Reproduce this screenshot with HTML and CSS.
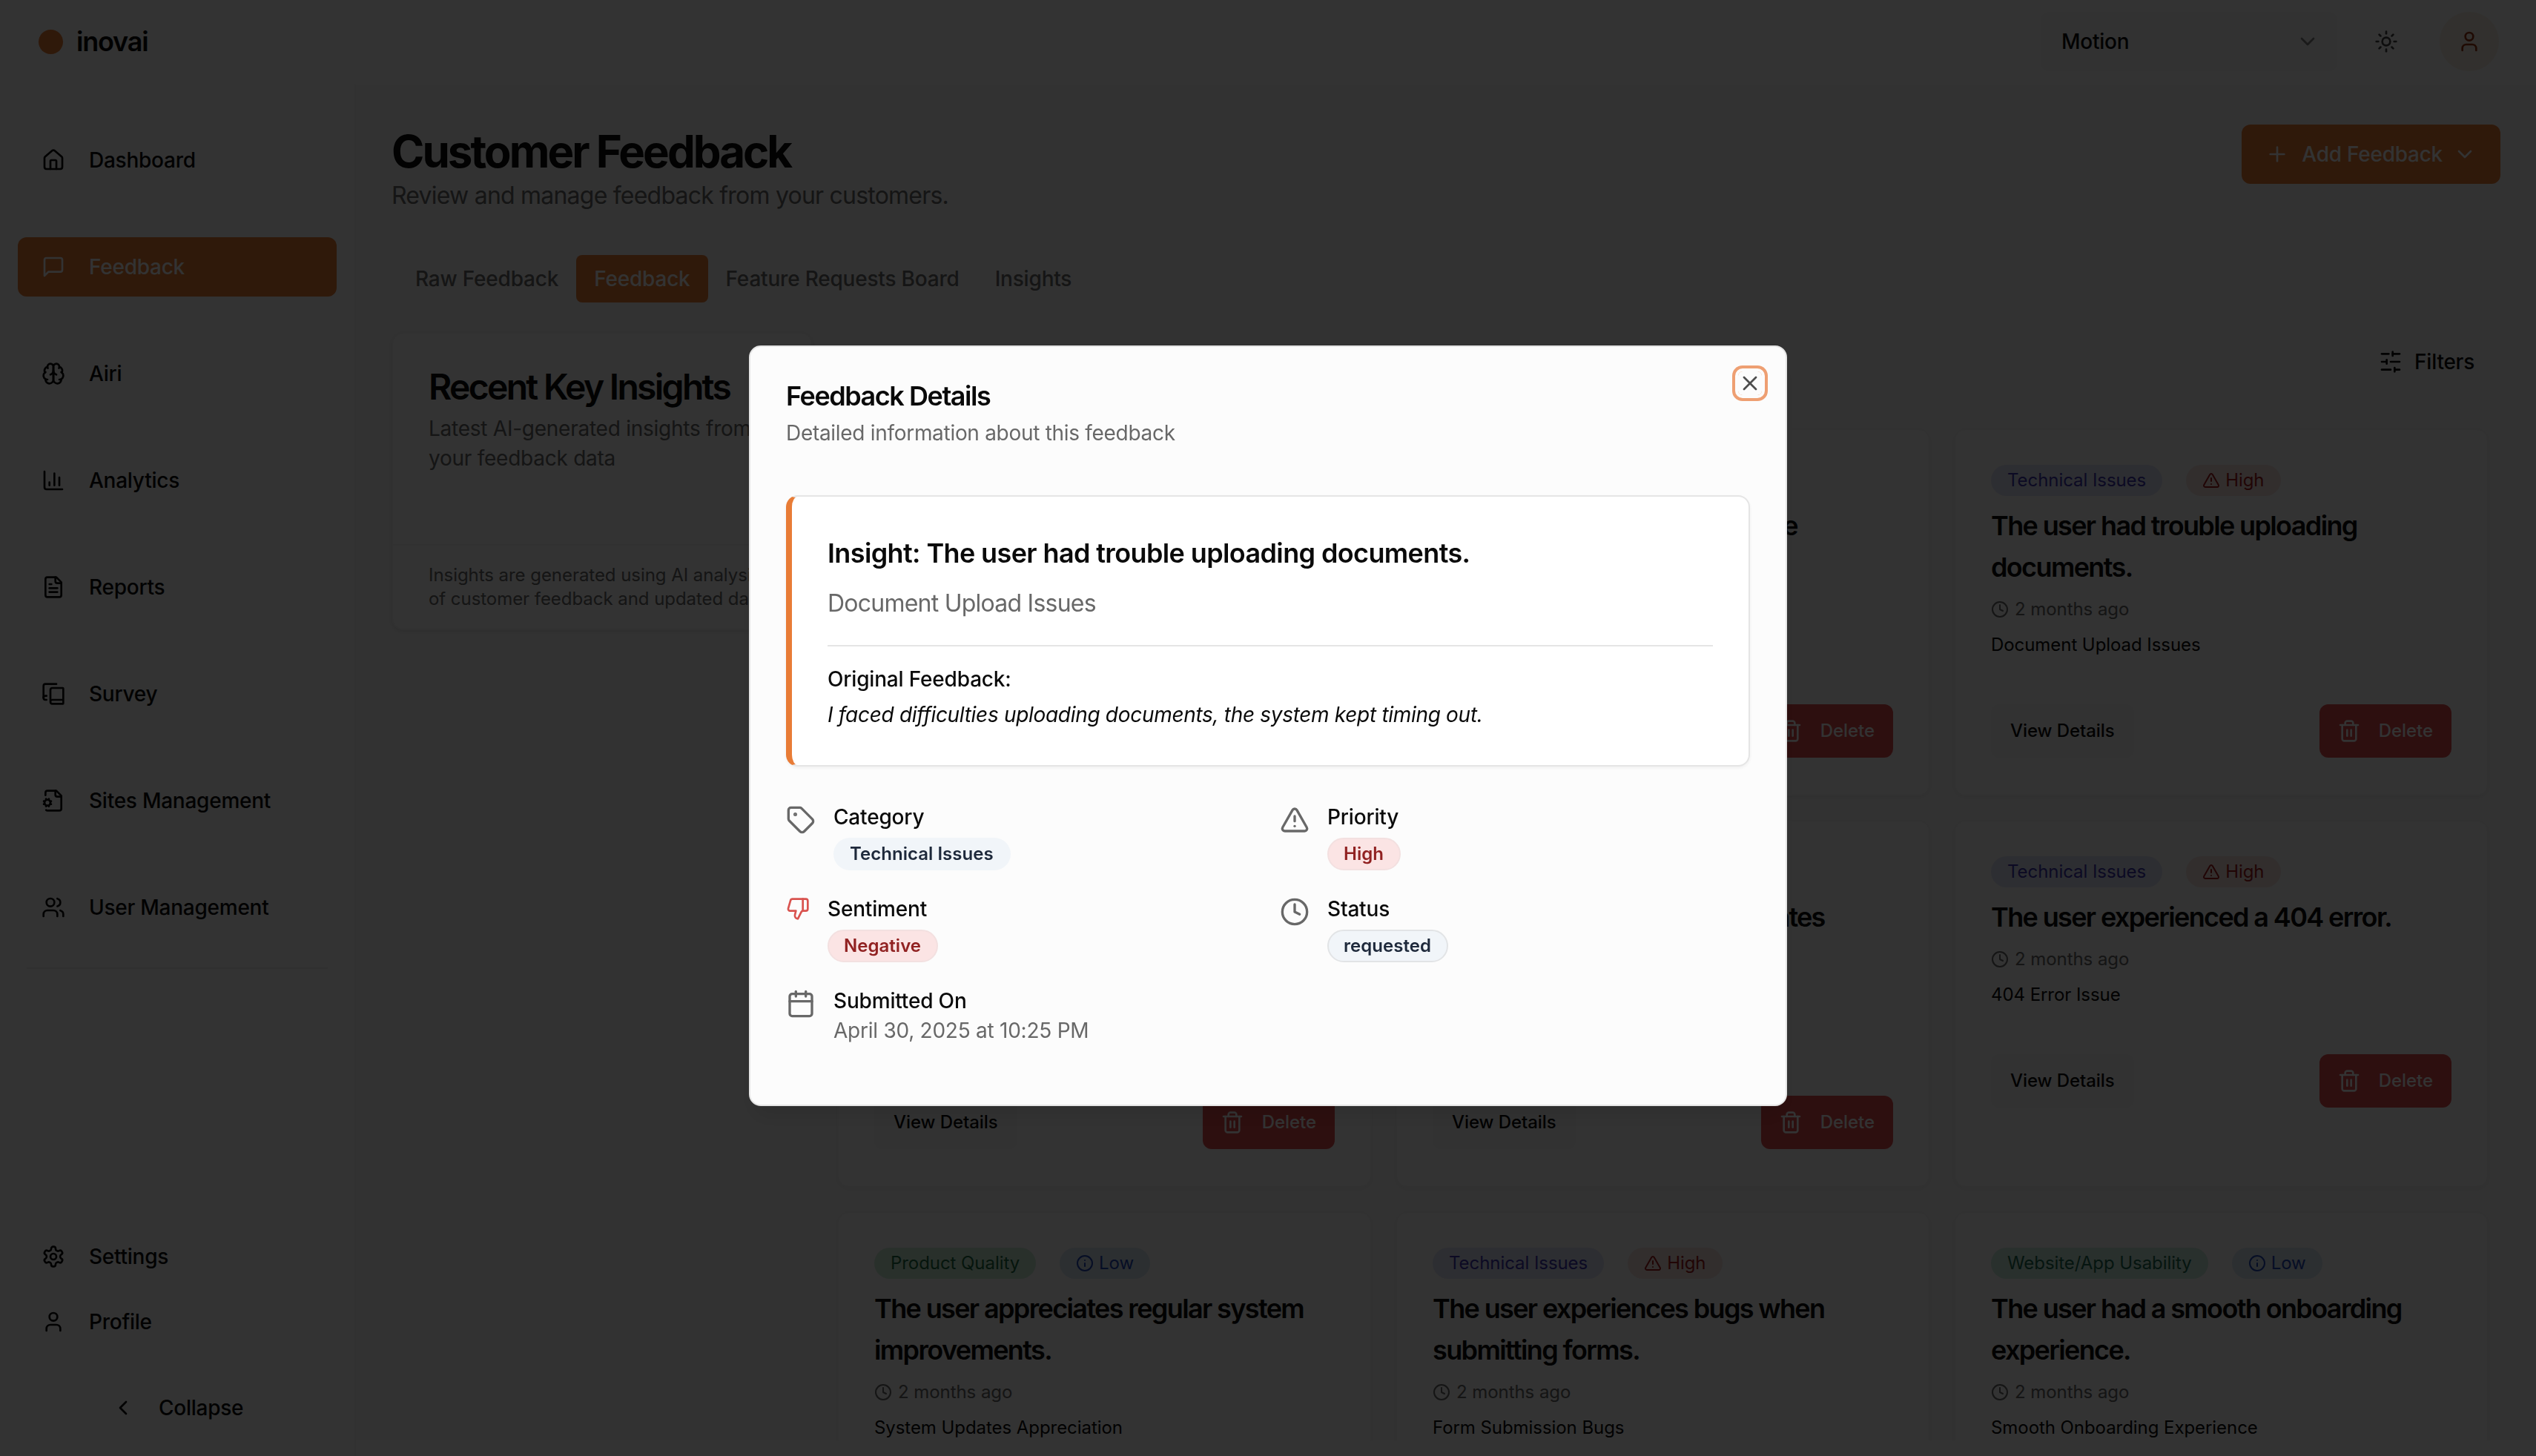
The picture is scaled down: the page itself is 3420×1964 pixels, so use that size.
FILE: index.html
```html
<!DOCTYPE html>
<html lang="en">
<head>
<meta charset="utf-8">
<title>inovai – Customer Feedback</title>
<link rel="stylesheet" href="styles.css">
</head>
<body>
<svg class="sprite" aria-hidden="true">
  <symbol id="house" viewBox="0 0 24 24"><path d="M15 21v-8a1 1 0 0 0-1-1h-4a1 1 0 0 0-1 1v8"/><path d="M3 10a2 2 0 0 1 .709-1.528l7-5.999a2 2 0 0 1 2.582 0l7 5.999A2 2 0 0 1 21 10v9a2 2 0 0 1-2 2H5a2 2 0 0 1-2-2z"/></symbol>
  <symbol id="message" viewBox="0 0 24 24"><path d="M21 15a2 2 0 0 1-2 2H7l-4 4V5a2 2 0 0 1 2-2h14a2 2 0 0 1 2 2z"/></symbol>
  <symbol id="brain" viewBox="0 0 24 24"><path d="M12 5a3 3 0 1 0-5.997.125 4 4 0 0 0-2.526 5.77 4 4 0 0 0 .556 6.588A4 4 0 1 0 12 18Z"/><path d="M12 5a3 3 0 1 1 5.997.125 4 4 0 0 1 2.526 5.77 4 4 0 0 1-.556 6.588A4 4 0 1 1 12 18Z"/><path d="M15 13a4.5 4.5 0 0 1-3-4 4.5 4.5 0 0 1-3 4"/><path d="M17.599 6.5a3 3 0 0 0 .399-1.375"/><path d="M6.003 5.125A3 3 0 0 0 6.401 6.5"/><path d="M3.477 10.896a4 4 0 0 1 .585-.396"/><path d="M19.938 10.5a4 4 0 0 1 .585.396"/><path d="M6 18a4 4 0 0 1-1.967-.516"/><path d="M19.967 17.484A4 4 0 0 1 18 18"/></symbol>
  <symbol id="chart" viewBox="0 0 24 24"><path d="M3 3v16a2 2 0 0 0 2 2h16"/><path d="M18 17V9"/><path d="M13 17V5"/><path d="M8 17v-3"/></symbol>
  <symbol id="file-text" viewBox="0 0 24 24"><path d="M15 2H6a2 2 0 0 0-2 2v16a2 2 0 0 0 2 2h12a2 2 0 0 0 2-2V7Z"/><path d="M14 2v4a2 2 0 0 0 2 2h4"/><path d="M10 9H8"/><path d="M16 13H8"/><path d="M16 17H8"/></symbol>
  <symbol id="book-copy" viewBox="0 0 24 24"><path d="M2 16V4a2 2 0 0 1 2-2h11"/><path d="M22 18H11a2 2 0 1 0 0 4h10.5a.5.5 0 0 0 .5-.5v-15a.5.5 0 0 0-.5-.5H11a2 2 0 0 0-2 2v12"/><path d="M5 14H4a2 2 0 1 0 0 4h1"/></symbol>
  <symbol id="file-cog" viewBox="0 0 24 24"><path d="M14 2v4a2 2 0 0 0 2 2h4"/><path d="m3.2 12.9-.9-.4"/><path d="m3.2 15.1-.9.4"/><path d="M4.677 21.5a2 2 0 0 0 1.313.5H18a2 2 0 0 0 2-2V7l-5-5H6a2 2 0 0 0-2 2v2.5"/><path d="m4.9 11.2-.4-.9"/><path d="m4.9 16.8-.4.9"/><path d="m7.5 10.3-.4.9"/><path d="m7.5 17.7-.4-.9"/><path d="m9.7 12.5-.9.4"/><path d="m9.7 15.5-.9-.4"/><circle cx="6" cy="14" r="3"/></symbol>
  <symbol id="users" viewBox="0 0 24 24"><path d="M16 21v-2a4 4 0 0 0-4-4H6a4 4 0 0 0-4 4v2"/><circle cx="9" cy="7" r="4"/><path d="M22 21v-2a4 4 0 0 0-3-3.87"/><path d="M16 3.13a4 4 0 0 1 0 7.75"/></symbol>
  <symbol id="settings" viewBox="0 0 24 24"><path d="M12.22 2h-.44a2 2 0 0 0-2 2v.18a2 2 0 0 1-1 1.73l-.43.25a2 2 0 0 1-2 0l-.15-.08a2 2 0 0 0-2.73.73l-.22.38a2 2 0 0 0 .73 2.73l.15.1a2 2 0 0 1 1 1.72v.51a2 2 0 0 1-1 1.74l-.15.09a2 2 0 0 0-.73 2.73l.22.38a2 2 0 0 0 2.73.73l.15-.08a2 2 0 0 1 2 0l.43.25a2 2 0 0 1 1 1.73V20a2 2 0 0 0 2 2h.44a2 2 0 0 0 2-2v-.18a2 2 0 0 1 1-1.73l.43-.25a2 2 0 0 1 2 0l.15.08a2 2 0 0 0 2.73-.73l.22-.39a2 2 0 0 0-.73-2.73l-.15-.08a2 2 0 0 1-1-1.74v-.5a2 2 0 0 1 1-1.74l.15-.09a2 2 0 0 0 .73-2.73l-.22-.38a2 2 0 0 0-2.73-.73l-.15.08a2 2 0 0 1-2 0l-.43-.25a2 2 0 0 1-1-1.73V4a2 2 0 0 0-2-2z"/><circle cx="12" cy="12" r="3"/></symbol>
  <symbol id="user" viewBox="0 0 24 24"><path d="M19 21v-2a4 4 0 0 0-4-4H9a4 4 0 0 0-4 4v2"/><circle cx="12" cy="7" r="4"/></symbol>
  <symbol id="chev-left" viewBox="0 0 24 24"><path d="m15 18-6-6 6-6"/></symbol>
  <symbol id="chev-down" viewBox="0 0 24 24"><path d="m6 9 6 6 6-6"/></symbol>
  <symbol id="plus" viewBox="0 0 24 24"><path d="M5 12h14"/><path d="M12 5v14"/></symbol>
  <symbol id="sun" viewBox="0 0 24 24"><circle cx="12" cy="12" r="4"/><path d="M12 2v2"/><path d="M12 20v2"/><path d="m4.93 4.93 1.41 1.41"/><path d="m17.66 17.66 1.41 1.41"/><path d="M2 12h2"/><path d="M20 12h2"/><path d="m6.34 17.66-1.41 1.41"/><path d="m19.07 4.93-1.41 1.41"/></symbol>
  <symbol id="sliders" viewBox="0 0 24 24"><path d="M21 4h-7"/><path d="M10 4H3"/><path d="M21 12h-9"/><path d="M8 12H3"/><path d="M21 20h-5"/><path d="M12 20H3"/><path d="M14 2v4"/><path d="M8 10v4"/><path d="M16 18v4"/></symbol>
  <symbol id="trash" viewBox="0 0 24 24"><path d="M3 6h18"/><path d="M19 6v14c0 1-1 2-2 2H7c-1 0-2-1-2-2V6"/><path d="M8 6V4c0-1 1-2 2-2h4c1 0 2 1 2 2v2"/><path d="M10 11v6"/><path d="M14 11v6"/></symbol>
  <symbol id="alert" viewBox="0 0 24 24"><path d="m21.73 18-8-14a2 2 0 0 0-3.48 0l-8 14A2 2 0 0 0 4 21h16a2 2 0 0 0 1.73-3"/><path d="M12 9v4"/><path d="M12 17h.01"/></symbol>
  <symbol id="info" viewBox="0 0 24 24"><circle cx="12" cy="12" r="10"/><path d="M12 16v-4"/><path d="M12 8h.01"/></symbol>
  <symbol id="clock" viewBox="0 0 24 24"><circle cx="12" cy="12" r="10"/><path d="M12 6v6l4 2"/></symbol>
  <symbol id="tag" viewBox="0 0 24 24"><path d="M12.586 2.586A2 2 0 0 0 11.172 2H4a2 2 0 0 0-2 2v7.172a2 2 0 0 0 .586 1.414l8.704 8.704a2.426 2.426 0 0 0 3.42 0l6.58-6.58a2.426 2.426 0 0 0 0-3.42z"/><circle cx="7.5" cy="7.5" r=".5" fill="currentColor"/></symbol>
  <symbol id="thumbs-down" viewBox="0 0 24 24"><path d="M17 14V2"/><path d="M9 18.12 10 14H4.17a2 2 0 0 1-1.92-2.56l2.33-8A2 2 0 0 1 6.5 2H20a2 2 0 0 1 2 2v8a2 2 0 0 1-2 2h-2.76a2 2 0 0 0-1.79 1.11L12 22a3.13 3.13 0 0 1-3-3.88Z"/></symbol>
  <symbol id="calendar" viewBox="0 0 24 24"><path d="M8 2v4"/><path d="M16 2v4"/><rect width="18" height="18" x="3" y="4" rx="2"/><path d="M3 10h18"/></symbol>
  <symbol id="close" viewBox="0 0 24 24"><path d="M18 6 6 18"/><path d="m6 6 12 12"/></symbol>
</svg>

<div class="app">
  <header class="topbar">
    <div class="brand"><span class="brand-dot"></span><span class="brand-name">inovai</span></div>
    <div class="top-actions">
      <div class="select"><span>Motion</span><svg class="icon faded"><use href="#chev-down"/></svg></div>
      <svg class="icon theme"><use href="#sun"/></svg>
      <div class="avatar"><svg class="icon"><use href="#user"/></svg></div>
    </div>
  </header>

  <div class="shell">
    <aside class="sidebar">
      <nav class="nav">
        <a class="nav-item"><svg class="icon"><use href="#house"/></svg>Dashboard</a>
        <a class="nav-item active"><svg class="icon"><use href="#message"/></svg>Feedback</a>
        <a class="nav-item"><svg class="icon"><use href="#brain"/></svg>Airi</a>
        <a class="nav-item"><svg class="icon"><use href="#chart"/></svg>Analytics</a>
        <a class="nav-item"><svg class="icon"><use href="#file-text"/></svg>Reports</a>
        <a class="nav-item"><svg class="icon"><use href="#book-copy"/></svg>Survey</a>
        <a class="nav-item"><svg class="icon"><use href="#file-cog"/></svg>Sites Management</a>
        <a class="nav-item"><svg class="icon"><use href="#users"/></svg>User Management</a>
      </nav>
      <hr class="nav-rule">
      <nav class="nav-bottom">
        <a class="nav-item"><svg class="icon"><use href="#settings"/></svg>Settings</a>
        <a class="nav-item"><svg class="icon"><use href="#user"/></svg>Profile</a>
        <a class="collapse"><svg class="icon"><use href="#chev-left"/></svg>Collapse</a>
      </nav>
    </aside>

    <main class="main">
      <div class="page-head">
        <div>
          <h1>Customer Feedback</h1>
          <p class="subtitle">Review and manage feedback from your customers.</p>
        </div>
        <button class="btn-add"><svg class="icon"><use href="#plus"/></svg>Add Feedback<svg class="icon caret"><use href="#chev-down"/></svg></button>
      </div>

      <div class="tabs">
        <span class="tab">Raw Feedback</span><span class="tab active">Feedback</span><span class="tab">Feature Requests Board</span><span class="tab">Insights</span>
      </div>

      <div class="content">
        <section class="insights">
          <div class="insights-head">
            <h2>Recent Key Insights</h2>
            <p>Latest AI-generated insights from your feedback data</p>
          </div>
          <p class="insights-foot">Insights are generated using AI analysis<br>of customer feedback and updated daily.</p>
        </section>

        <section class="board">
          <div class="board-tools"><svg class="icon"><use href="#sliders"/></svg>Filters</div>
          <div class="cards">
            <article class="card">
              <div class="badges"><span class="badge tech">Technical Issues</span><span class="badge high"><svg class="icon-xs"><use href="#alert"/></svg>High</span></div>
              <h3>The user had trouble uploading documents.</h3>
              <p class="time"><svg class="icon-xs"><use href="#clock"/></svg>2 months ago</p>
              <p class="topic">Document Upload Issues</p>
              <div class="card-actions"><button class="btn-view">View Details</button><button class="btn-delete"><svg class="icon"><use href="#trash"/></svg>Delete</button></div>
            </article>
            <article class="card">
              <div class="badges"><span class="badge tech">Technical Issues</span><span class="badge high"><svg class="icon-xs"><use href="#alert"/></svg>High</span></div>
              <h3>The user reported issues to the<br>support team.</h3>
              <p class="time"><svg class="icon-xs"><use href="#clock"/></svg>2 months ago</p>
              <p class="topic">Document Upload Issues</p>
              <div class="card-actions"><button class="btn-view">View Details</button><button class="btn-delete"><svg class="icon"><use href="#trash"/></svg>Delete</button></div>
            </article>
            <article class="card">
              <div class="badges"><span class="badge tech">Technical Issues</span><span class="badge high"><svg class="icon-xs"><use href="#alert"/></svg>High</span></div>
              <h3>The user had trouble uploading documents.</h3>
              <p class="time"><svg class="icon-xs"><use href="#clock"/></svg>2 months ago</p>
              <p class="topic">Document Upload Issues</p>
              <div class="card-actions"><button class="btn-view">View Details</button><button class="btn-delete"><svg class="icon"><use href="#trash"/></svg>Delete</button></div>
            </article>

            <article class="card">
              <div class="badges"><span class="badge tech">Technical Issues</span><span class="badge high"><svg class="icon-xs"><use href="#alert"/></svg>High</span></div>
              <h3>The user had trouble uploading<br>documents.</h3>
              <p class="time"><svg class="icon-xs"><use href="#clock"/></svg>2 months ago</p>
              <p class="topic">Document Upload Issues</p>
              <div class="card-actions"><button class="btn-view">View Details</button><button class="btn-delete"><svg class="icon"><use href="#trash"/></svg>Delete</button></div>
            </article>
            <article class="card">
              <div class="badges"><span class="badge product">Product Quality</span><span class="badge low"><svg class="icon-xs"><use href="#info"/></svg>Low</span></div>
              <h3 class="snug">The user values frequent updates<br>to the system.</h3>
              <p class="time"><svg class="icon-xs"><use href="#clock"/></svg>2 months ago</p>
              <p class="topic">System Updates Appreciation</p>
              <div class="card-actions"><button class="btn-view">View Details</button><button class="btn-delete"><svg class="icon"><use href="#trash"/></svg>Delete</button></div>
            </article>
            <article class="card">
              <div class="badges"><span class="badge tech">Technical Issues</span><span class="badge high"><svg class="icon-xs"><use href="#alert"/></svg>High</span></div>
              <h3>The user experienced a 404 error.</h3>
              <p class="time"><svg class="icon-xs"><use href="#clock"/></svg>2 months ago</p>
              <p class="topic">404 Error Issue</p>
              <div class="card-actions"><button class="btn-view">View Details</button><button class="btn-delete"><svg class="icon"><use href="#trash"/></svg>Delete</button></div>
            </article>

            <article class="card">
              <div class="badges"><span class="badge product">Product Quality</span><span class="badge low"><svg class="icon-xs"><use href="#info"/></svg>Low</span></div>
              <h3>The user appreciates regular system<br>improvements.</h3>
              <p class="time"><svg class="icon-xs"><use href="#clock"/></svg>2 months ago</p>
              <p class="topic">System Updates Appreciation</p>
            </article>
            <article class="card">
              <div class="badges"><span class="badge tech">Technical Issues</span><span class="badge high"><svg class="icon-xs"><use href="#alert"/></svg>High</span></div>
              <h3>The user experiences bugs when<br>submitting forms.</h3>
              <p class="time"><svg class="icon-xs"><use href="#clock"/></svg>2 months ago</p>
              <p class="topic">Form Submission Bugs</p>
            </article>
            <article class="card">
              <div class="badges"><span class="badge usability">Website/App Usability</span><span class="badge low"><svg class="icon-xs"><use href="#info"/></svg>Low</span></div>
              <h3>The user had a smooth onboarding<br>experience.</h3>
              <p class="time"><svg class="icon-xs"><use href="#clock"/></svg>2 months ago</p>
              <p class="topic">Smooth Onboarding Experience</p>
            </article>
          </div>
        </section>
      </div>
    </main>
  </div>
</div>

<div class="overlay">
  <div class="dialog">
    <button class="dialog-close"><svg class="icon"><use href="#close"/></svg></button>
    <h2 class="dialog-title">Feedback Details</h2>
    <p class="dialog-desc">Detailed information about this feedback</p>
    <div class="insight">
      <h3>Insight: The user had trouble uploading documents.</h3>
      <p class="insight-topic">Document Upload Issues</p>
      <div class="original">
        <p class="label">Original Feedback:</p>
        <p class="quote">I faced difficulties uploading documents, the system kept timing out.</p>
      </div>
    </div>
    <div class="facts">
      <div class="fact"><svg class="icon-lg"><use href="#tag"/></svg><div><p class="label">Category</p><span class="pill slate">Technical Issues</span></div></div>
      <div class="fact"><svg class="icon-lg"><use href="#alert"/></svg><div><p class="label">Priority</p><span class="pill red">High</span></div></div>
      <div class="fact"><svg class="icon negative"><use href="#thumbs-down"/></svg><div><p class="label">Sentiment</p><span class="pill red">Negative</span></div></div>
      <div class="fact"><svg class="icon-lg"><use href="#clock"/></svg><div><p class="label">Status</p><span class="pill slate outlined">requested</span></div></div>
      <div class="fact"><svg class="icon-lg"><use href="#calendar"/></svg><div><p class="label">Submitted On</p><p class="date">April 30, 2025 at 10:25 PM</p></div></div>
    </div>
  </div>
</div>
</body>
</html>
```
FILE: styles.css
```css
:root {
  --orange: #e87c36;
  --red: #e04a4a;
  --muted: #686868;
  --line: #e5e5e5;
  --ink: #0a0a0a;
}
* { box-sizing: border-box; margin: 0; padding: 0; }
body {
  width: 3420px;
  height: 1964px;
  overflow: hidden;
  background: #fcfcfc;
  color: var(--ink);
  font-family: Inter, "Liberation Sans", sans-serif;
  font-size: 28px;
  line-height: 40px;
  letter-spacing: -0.25px;
}
button { font: inherit; letter-spacing: inherit; color: inherit; border: 0; background: none; }
.sprite { display: none; }
.icon, .icon-lg, .icon-xs {
  flex: none;
  width: 32px;
  height: 32px;
  fill: none;
  stroke: currentColor;
  stroke-width: 2;
  stroke-linecap: round;
  stroke-linejoin: round;
}
.icon-lg { width: 40px; height: 40px; }
.icon-xs { width: 24px; height: 24px; }

.app { display: flex; flex-direction: column; height: 1964px; }

/* Top bar */
.topbar {
  display: flex;
  align-items: center;
  justify-content: space-between;
  height: 114px;
  padding: 0 50px 2px 52px;
  flex: none;
}
.brand { display: flex; align-items: center; gap: 18px; }
.brand-dot { width: 33px; height: 33px; border-radius: 50%; background: var(--orange); }
.brand-name { font-size: 36px; font-weight: 600; letter-spacing: -1.2px; }
.top-actions { display: flex; align-items: center; }
.select {
  display: flex;
  align-items: center;
  justify-content: space-between;
  width: 400px;
  height: 80px;
  padding: 0 24px 0 28px;
  border-radius: 12px;
  background: #f8f8f8;
  font-weight: 500;
}
.faded { opacity: .5; }
.theme { margin: 0 56px 0 50px; color: #404040; }
.avatar {
  display: flex;
  align-items: center;
  justify-content: center;
  width: 80px;
  height: 80px;
  border-radius: 50%;
  background: #faf0e4;
  color: #9a3412;
}

/* Sidebar */
.shell { display: flex; flex: 1; min-height: 0; }
.sidebar {
  display: flex;
  flex-direction: column;
  flex: none;
  width: 480px;
  padding: 62px 24px 25px;
  border-right: 2px solid #f5f5f5;
}
.nav { display: flex; flex-direction: column; gap: 64px; }
.nav-item {
  display: flex;
  align-items: center;
  gap: 32px;
  height: 80px;
  padding: 0 32px;
  border-radius: 12px;
  font-weight: 500;
}
.nav-item.active { background: var(--orange); color: #fcfcfc; }
.nav-rule { margin: 41px 12px 0; border: 0; border-top: 2px solid #efefef; }
.nav-bottom { display: flex; flex-direction: column; gap: 8px; margin-top: auto; }
.collapse {
  display: flex;
  align-items: center;
  gap: 32px;
  height: 80px;
  margin-top: 28px;
  padding-left: 126px;
  font-weight: 500;
}

/* Page header */
.main {
  flex: 1;
  min-width: 0;
  margin-bottom: 21px;
  padding: 54px 48px 0;
  overflow: hidden;
  background: #fafafa;
}
.page-head { display: flex; justify-content: space-between; align-items: flex-start; }
h1 { font-size: 60px; line-height: 72px; font-weight: 700; letter-spacing: -2.98px; }
.subtitle { font-size: 32px; line-height: 48px; letter-spacing: -0.78px; color: var(--muted); }
.btn-add {
  display: flex;
  align-items: center;
  gap: 17px;
  height: 80px;
  padding: 0 32px;
  border-radius: 12px;
  background: var(--orange);
  color: #fcfcfc;
  font-weight: 500;
}
.caret { margin-left: -3px; }
.tabs {
  display: inline-flex;
  height: 80px;
  margin-top: 48px;
  padding: 8px;
  border-radius: 12px;
  background: #f8f8f8;
  color: var(--muted);
  font-weight: 500;
  letter-spacing: -0.2px;
}
.tab { height: 64px; padding: 0 24px; border-radius: 8px; line-height: 64px; }
.tab.active { background: var(--orange); color: #fcfcfc; }

/* Insights panel and board */
.content { display: flex; align-items: flex-start; gap: 33px; margin-top: 32px; }
.insights {
  flex: none;
  width: 568px;
  border: 2px solid #f6f6f6;
  border-radius: 16px;
  background: #fcfcfc;
  box-shadow: 0 2px 6px rgba(0, 0, 0, .1);
}
.insights-head { height: 284px; padding: 48px; }
.insights h2 { font-size: 48px; line-height: 48px; font-weight: 600; letter-spacing: -2.7px; }
.insights-head p { margin-top: 12px; color: var(--muted); }
.insights-foot {
  padding: 24px 24px 24px 48px;
  border-top: 2px solid #f4f4f4;
  color: var(--muted);
  font-size: 24px;
  line-height: 32px;
  letter-spacing: -0.05px;
}
.board { flex: 1; min-width: 0; padding-right: 16px; }
.board-tools {
  display: flex;
  align-items: center;
  justify-content: flex-end;
  gap: 16px;
  height: 80px;
  padding-right: 19px;
  font-weight: 500;
}
.cards {
  display: grid;
  grid-template-columns: repeat(3, 1fr);
  grid-auto-rows: 496px;
  gap: 32px;
  margin-top: 50px;
  letter-spacing: -0.06px;
}
.card {
  padding: 47px 48px 48px;
  border: 2px solid #f6f6f6;
  border-radius: 16px;
  background: #fcfcfc;
  box-shadow: 0 2px 6px rgba(0, 0, 0, .06);
}
.badges { display: flex; gap: 32px; }
.badge {
  display: flex;
  align-items: center;
  gap: 7px;
  height: 42px;
  padding: 0 22px;
  border-radius: 22px;
  font-size: 24px;
}
.tech { background: #e2e5f8; color: #3f35b0; }
.high { background: #f9e5e2; color: #a31c1c; }
.low { background: #dce8f5; color: #1e46b8; }
.product { background: #cdeed8; color: #1d6b40; }
.usability { background: #cdeee0; color: #1d6b50; }
.card h3 {
  margin-top: 12px;
  font-size: 36px;
  line-height: 56px;
  font-weight: 600;
  letter-spacing: -1.63px;
}
.card h3.snug { letter-spacing: -1.77px; }
.time {
  display: flex;
  align-items: center;
  gap: 8px;
  margin-top: 13px;
  color: var(--muted);
  font-size: 24px;
  line-height: 32px;
}
.topic { margin-top: 16px; font-size: 24px; line-height: 32px; }
.card-actions { display: flex; justify-content: space-between; margin-top: 64px; font-size: 24px; font-weight: 500; }
.btn-view { height: 72px; padding: 0 26px; border-radius: 12px; background: #f9f9f9; }
.btn-delete {
  display: flex;
  align-items: center;
  gap: 24px;
  height: 72px;
  padding: 0 25px 0 24px;
  border-radius: 12px;
  background: var(--red);
  color: #fcfcfc;
}

/* Dialog */
.overlay {
  position: fixed;
  inset: 0;
  display: flex;
  align-items: flex-start;
  justify-content: center;
  padding-top: 466px;
  background: rgba(0, 0, 0, .8);
}
.dialog {
  position: relative;
  width: 1400px;
  height: 1026px;
  padding: 48px;
  border: 2px solid var(--line);
  border-radius: 16px;
  background: #fcfcfc;
  box-shadow: 0 20px 30px -6px rgba(0, 0, 0, .1);
}
.dialog-close {
  position: absolute;
  top: 33px;
  right: 32px;
  display: flex;
  border-radius: 6px;
  color: #4d4d4d;
  box-shadow: 0 0 0 4px #fcfcfc, 0 0 0 8px #ee9f72;
}
.dialog-title { font-size: 36px; line-height: 36px; font-weight: 600; letter-spacing: -1.45px; }
.dialog-desc { margin-top: 12px; letter-spacing: -0.3px; color: var(--muted); }
.insight {
  height: 366px;
  margin-top: 64px;
  padding: 48px;
  border: 2px solid var(--line);
  border-left: 8px solid var(--orange);
  border-radius: 16px;
  background: #fff;
  box-shadow: 0 2px 4px rgba(0, 0, 0, .05);
}
.insight h3 { font-size: 36px; line-height: 56px; font-weight: 600; letter-spacing: -0.62px; }
.insight-topic { margin-top: 16px; font-size: 32px; line-height: 48px; letter-spacing: -0.76px; color: var(--muted); }
.original { margin-top: 32px; padding-top: 24px; border-top: 2px solid var(--line); }
.label { font-weight: 500; letter-spacing: -0.18px; }
.quote { margin-top: 8px; font-style: italic; letter-spacing: -0.31px; }
.facts { display: grid; grid-template-columns: 1fr 1fr; gap: 32px; margin-top: 48px; }
.fact { display: flex; gap: 24px; }
.fact .icon-lg { margin-top: 4px; color: var(--muted); }
.fact .negative { margin-top: 4px; color: #d9534f; }
.pill {
  display: block;
  width: max-content;
  height: 44px;
  margin-top: 8px;
  padding: 0 21px 0 20px;
  border-radius: 22px;
  border: 2px solid transparent;
  font-size: 24px;
  line-height: 40px;
  font-weight: 600;
  letter-spacing: 0.03px;
}
.slate { background: #f1f5f9; color: #1e293b; }
.red { background: #fbe4e4; color: #912222; border-color: #f3e0e0; }
.outlined { border-color: #e2e4e6; }
.date { color: var(--muted); }
```
